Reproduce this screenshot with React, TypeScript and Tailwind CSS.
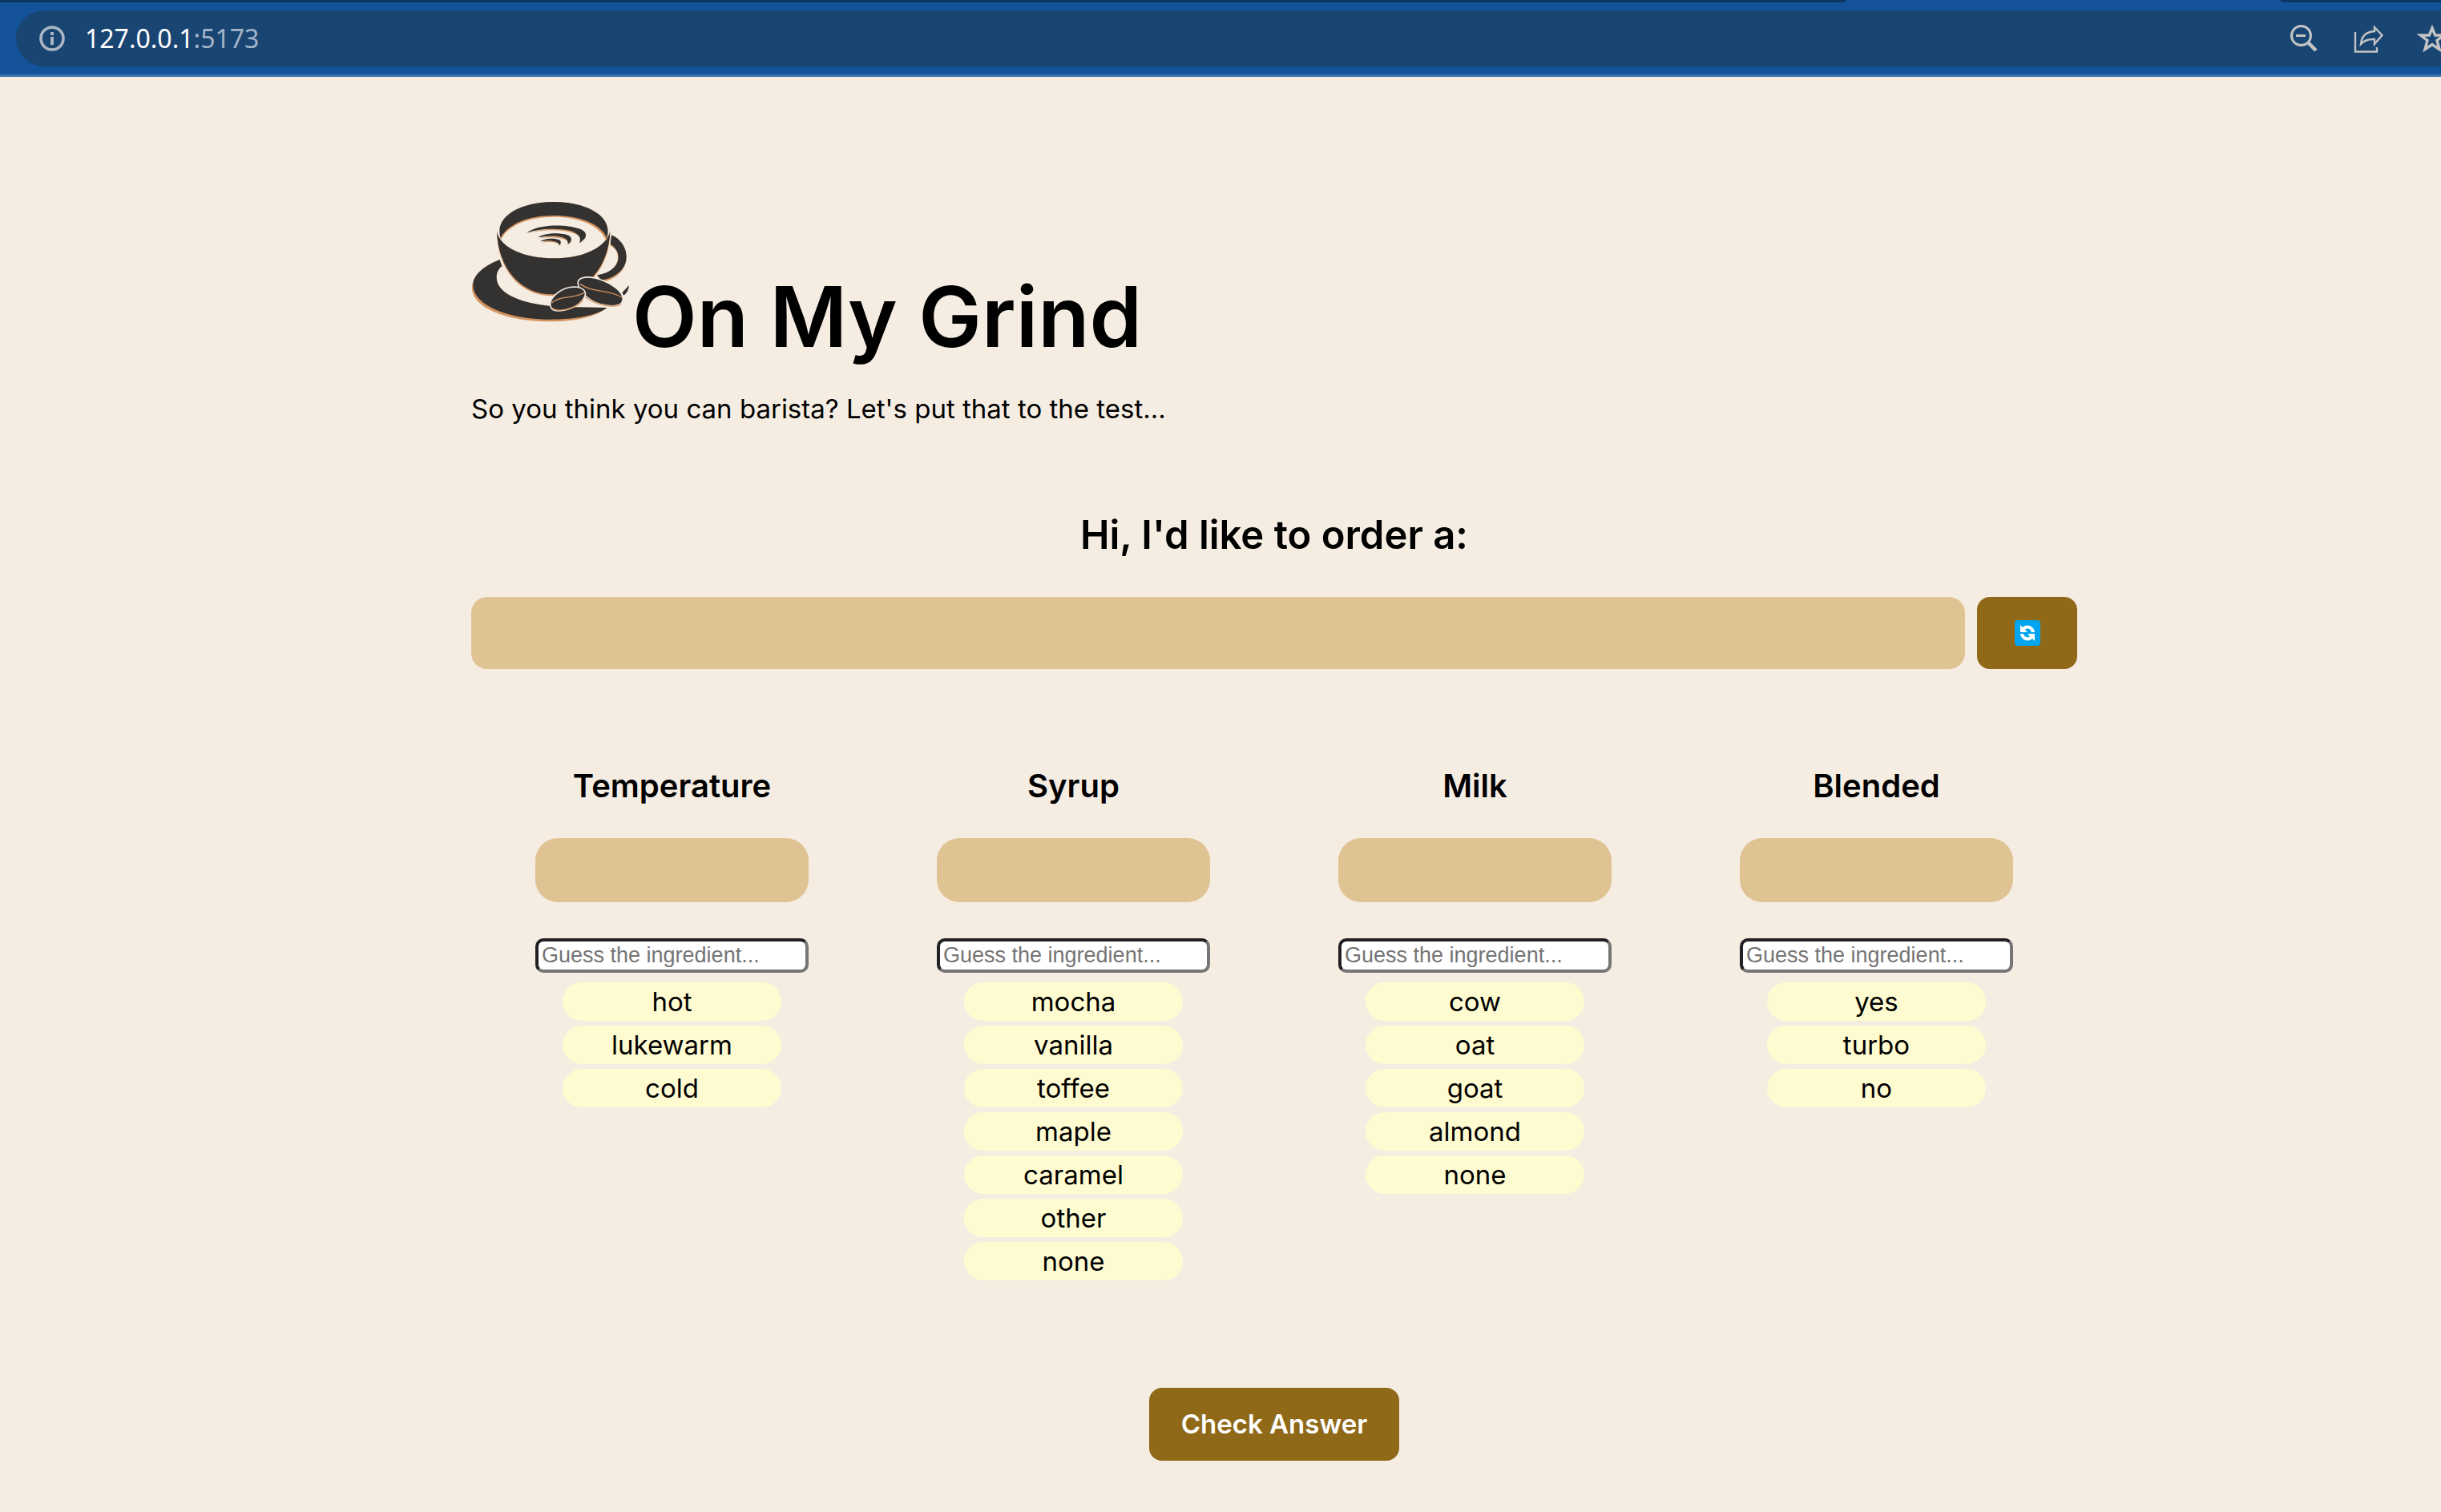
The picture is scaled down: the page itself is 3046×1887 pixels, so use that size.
const columns = [
  { name: 'Temperature', items: ['hot', 'lukewarm', 'cold'] },
  { name: 'Syrup', items: ['mocha', 'vanilla', 'toffee', 'maple', 'caramel', 'other', 'none'] },
  { name: 'Milk', items: ['cow', 'oat', 'goat', 'almond', 'none'] },
  { name: 'Blended', items: ['yes', 'turbo', 'no'] },
];

function CoffeeLogo() {
  return (
    <svg viewBox="0 0 600 462" className="ml-px h-[154px] w-[200px] shrink-0" aria-hidden="true">
      {/* saucer */}
      <path d="M102 222C40 248 0 284 0 328C0 402 130 454 290 454C390 454 470 434 505 402L380 400C200 400 92 352 92 290C92 270 98 258 112 246Z" fill="#d4935f" />
      <path d="M104 222C40 248 4 280 4 318C4 390 130 446 290 446C390 446 470 430 505 402L380 400C200 400 92 352 92 290C92 270 98 258 112 246Z" fill="#333231" />
      <path d="M588 318C586 338 578 348 568 356L562 346Z" fill="#333231" />
      {/* handle */}
      <path d="M522 134C552 146 578 176 578 216C578 262 534 300 484 306L468 280C510 278 546 250 546 214C546 192 534 178 518 170Z" fill="#d4935f" />
      <path d="M522 130C552 142 578 172 578 212C578 258 534 292 484 298L468 280C510 274 548 250 548 212C548 190 534 174 518 164Z" fill="#333231" />
      {/* bowl */}
      <path d="M93 120C96 260 180 358 300 358C430 358 516 250 517 120C500 180 410 217 308 217C200 217 106 180 93 120Z" fill="#d4935f" />
      <path d="M93 116C98 256 184 352 300 352C430 352 512 246 517 116C500 180 410 217 308 217C200 217 106 180 93 116Z" fill="#333231" />
      {/* rim */}
      <path d="M106 144C92 60 180 6 306 6C430 6 530 60 503 152C480 94 400 62 306 62C206 62 136 96 110 144Z" fill="#d4935f" />
      <path d="M106 138C84 60 180 6 306 6C430 6 530 60 505 140C480 86 400 57 306 57C206 57 136 90 108 138Z" fill="#333231" />
      {/* latte art */}
      <g fill="#d4935f">
        <path d="M206 124C300 94 446 104 424 134C420 148 408 156 402 162C416 140 404 130 370 120C320 106 250 112 206 124Z" />
        <path d="M248 143C300 126 388 130 371 154C370 160 364 164 358 166C366 150 348 144 320 140C290 137 268 140 248 143Z" />
        <path d="M256 158C300 146 342 150 332 164L327 171C330 158 300 153 256 158Z" />
      </g>
      <g fill="#333231">
        <path d="M204 122C250 88 350 90 400 106C424 114 430 126 424 140C420 148 410 152 402 160C412 138 396 124 370 114C320 102 250 106 204 122Z" />
        <path d="M248 139C270 120 340 120 362 132C374 138 372 148 368 156L358 164C364 148 344 136 320 134C290 132 268 135 248 139Z" />
        <path d="M256 154C270 142 310 140 326 148C334 152 334 160 327 169C326 154 296 148 256 154Z" />
      </g>
      {/* beans */}
      <g stroke="#f5ece2" strokeWidth="5">
        <path d="M400 298C424 276 490 292 536 326C562 346 572 368 560 384C540 404 470 396 432 364C404 342 390 312 400 298Z" fill="#333231" />
        <path d="M294 398C284 370 330 326 380 324C424 324 436 348 412 376C386 408 306 430 294 398Z" fill="#333231" />
      </g>
      <g fill="none" stroke="#d4935f" strokeWidth="4">
        <path d="M405 314C450 346 512 332 562 364" />
        <path d="M298 384C330 356 376 370 420 346" />
        <path d="M424 362C470 396 540 404 558 388M298 402C318 422 388 408 416 374" />
      </g>
    </svg>
  );
}

function BrowserBar() {
  return (
    <header className="border-b-[3px] border-[#4478b4] bg-[#145299]">
      <div className="flex h-[3px] gap-[543px]">
        <span className="flex-1 rounded-br-full bg-[#0d3563]" />
        <span className="w-[200px] rounded-bl-full bg-[#0d3563]" />
      </div>
      <div className="py-[10px] pl-5">
        <div className="flex h-[70px] items-center overflow-hidden rounded-l-full bg-[#194573] pl-[29px]">
          <svg viewBox="0 0 32 32" className="size-8 shrink-0" fill="none" stroke="#aab6c3" aria-hidden="true">
            <circle cx="16" cy="16" r="14" strokeWidth="3.6" />
            <path d="M16 14V24M16 8V12" strokeWidth="4" />
          </svg>
          <p className="ml-[25px] flex-1 font-['Noto_Sans',sans-serif] text-[32px] text-white">
            127.0.0.1<span className="text-[#a3b5c7]">:5173</span>
          </p>
          <div className="-mr-2 flex items-center gap-[41px] text-[#c4c4c4]">
            <svg viewBox="0 0 38 38" className="size-[38px]" fill="none" stroke="currentColor" aria-hidden="true">
              <circle cx="13.5" cy="15.5" r="12" strokeWidth="3" />
              <path d="M7 15.5H19" strokeWidth="3" />
              <path d="M22 24L32 34" strokeWidth="4.5" />
            </svg>
            <svg viewBox="0 0 38 38" className="size-[38px]" fill="none" stroke="currentColor" strokeWidth="2.4" aria-hidden="true">
              <path d="M2 11V35.5H29V30" />
              <path d="M26 5L35.5 15L26 26V20C18 19.500 13 21.500 9 26C10 16 16 10.500 26 10Z" />
            </svg>
            <svg viewBox="0 0 38 38" className="size-[38px]" fill="none" stroke="currentColor" strokeWidth="3.4" aria-hidden="true">
              <path d="M19 6L22.700 15H33.500L25 21.500L28 32.500L19 26.500L10 32.500L13 21.500L4.500 15H15.300Z" />
            </svg>
          </div>
        </div>
      </div>
    </header>
  );
}

export default function App() {
  return (
    <div className="min-h-screen bg-[#f5ece2] font-[Inter,sans-serif] text-black">
      <BrowserBar />
      <div className="pl-[134px]">
        <main className="mx-auto max-w-[2004px] pt-[154px] pb-16">
          <div className="flex items-start">
            <CoffeeLogo />
            <h1 className="mt-[70px] text-[105px] leading-[150px] font-semibold">On My Grind</h1>
          </div>
          <p className="mt-4 text-[33px] leading-[48px]">So you think you can barista? Let's put that to the test...</p>
          <h2 className="mt-[98px] text-center text-[49px] leading-[72px] font-semibold">Hi, I'd like to order a:</h2>
          <div className="mt-[41px] flex gap-[15px]">
            <div className="h-[90px] flex-1 rounded-[20px] bg-[#dfc393]" />
            <button type="button" aria-label="New order" className="flex w-[125px] items-center justify-center rounded-2xl bg-[#8f6918]">
              <svg viewBox="0 0 32 32" className="size-8" aria-hidden="true">
                <rect width="32" height="32" rx="4" fill="#00a4ef" />
                <path d="M7 6V15H16L13 12C16 9 20 11 21 15H25C24 7 15 4 10 9ZM25 26V17H16L19 20C16 23 12 21 11 17H7C8 25 17 28 22 23Z" fill="#fff" />
              </svg>
            </button>
          </div>
          <div className="mt-[110px] grid grid-cols-4">
            {columns.map((c) => (
              <section key={c.name} className="flex flex-col items-center px-20">
                <h3 className="text-[40px] leading-[72px] font-semibold">{c.name}</h3>
                <div className="mt-[29px] h-20 w-full rounded-[28px] bg-[#dfc393]" />
                <input
                  aria-label={c.name}
                  placeholder="Guess the ingredient..."
                  className="mt-[45px] h-[43px] w-full rounded-[10px] border-4 border-t-[#212124] border-r-[#767676] border-b-[#767676] border-l-[#212124] bg-white px-1 font-['Liberation_Sans',sans-serif] text-[27px] placeholder:text-[#757575]"
                />
                <ul className="mt-3 flex w-4/5 flex-col gap-[6px] text-center text-[33px] leading-[48px]">
                  {c.items.map((i) => (
                    <li key={i} className="rounded-full bg-[#fffbd1]">{i}</li>
                  ))}
                </ul>
              </section>
            ))}
          </div>
          <div className="mt-[134px] flex justify-center">
            <button type="button" className="h-[91px] rounded-2xl bg-[#8f6918] px-10 text-[33px] font-semibold text-white">Check Answer</button>
          </div>
        </main>
      </div>
    </div>
  );
}
